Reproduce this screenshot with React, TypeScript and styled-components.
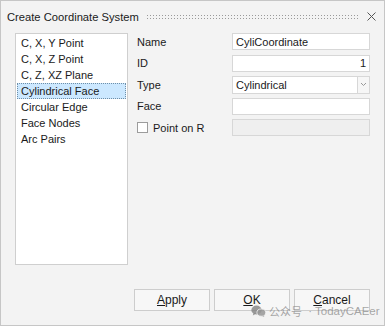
import styled, { createGlobalStyle } from 'styled-components';

const GlobalStyle = createGlobalStyle`
  html, body {
    margin: 0;
    padding: 0;
    background: #f3f3f3;
  }
  * {
    box-sizing: border-box;
  }
`;

const Dialog = styled.div`
  position: relative;
  width: 385px;
  height: 326px;
  display: flex;
  flex-direction: column;
  border: 1px solid #c6c6c6;
  background: #f3f3f3;
  font-family: 'Liberation Sans', Arial, sans-serif;
  font-size: 11px;
  color: #1a1a1a;
`;

const TitleBar = styled.div`
  height: 31px;
  display: flex;
  align-items: center;
  padding: 0 8px 0 6px;
  font-size: 11.2px;
`;

const Grip = styled.div`
  flex: 1;
  height: 6px;
  margin: 0 8px 0 7px;
  background-image: radial-gradient(circle, #9a9a9a 0.7px, transparent 1px);
  background-size: 3px 3px;
`;

const Close = styled.span`
  width: 9px;
  height: 9px;
  display: flex;
  color: #555;
`;

const Body = styled.div`
  display: flex;
  padding: 1px 14px 0 14px;
  gap: 8px;
`;

const ListBox = styled.ul`
  width: 115px;
  height: 232px;
  margin: 0;
  padding: 1px 1px;
  list-style: none;
  background: #fff;
  border: 1px solid #cfcfcf;
`;

const ListItem = styled.li<{ $selected?: boolean }>`
  height: 16px;
  line-height: 14px;
  padding: 0 3px;
  border: 1px dotted ${(p) => (p.$selected ? '#6f8fa8' : 'transparent')};
  background: ${(p) => (p.$selected ? '#cce8ff' : 'transparent')};
  white-space: nowrap;
`;

const Form = styled.div`
  display: grid;
  grid-template-columns: 96px 138px;
  grid-auto-rows: 17px;
  row-gap: 4.5px;
  align-items: center;
`;

const Label = styled.label`
  display: flex;
  align-items: center;
  gap: 5px;
  padding-left: 1px;
`;

const Field = styled.div<{ $disabled?: boolean; $align?: string }>`
  height: 17px;
  display: flex;
  align-items: center;
  justify-content: ${(p) => p.$align ?? 'flex-start'};
  padding: 0 3px;
  background: ${(p) => (p.$disabled ? '#efefef' : '#fff')};
  border: 1px solid #d7d7d7;
`;

const Combo = styled.div`
  height: 18px;
  display: flex;
  background: #fff;
  border: 1px solid #d7d7d7;
`;

const ComboText = styled.span`
  flex: 1;
  display: flex;
  align-items: center;
  padding: 0 3px;
`;

const ComboButton = styled.span`
  width: 12px;
  display: flex;
  align-items: center;
  justify-content: center;
  border-left: 1px solid #d7d7d7;
  background: #f6f6f6;
`;

const Check = styled.span`
  width: 11px;
  height: 11px;
  border: 1px solid #9c9c9c;
  background: #fff;
`;

const Footer = styled.div`
  margin-top: auto;
  display: flex;
  justify-content: flex-end;
  gap: 4px;
  padding: 0 14px 14px 0;
`;

const Button = styled.button`
  width: 76px;
  height: 22px;
  padding: 0;
  border: 1px solid #cdcdcd;
  background: #f7f7f7;
  font-family: inherit;
  font-size: 12px;
  color: #1a1a1a;

  & u {
    text-decoration-thickness: 1px;
  }
`;

const Watermark = styled.div`
  position: absolute;
  left: 250px;
  top: 302px;
  display: flex;
  align-items: center;
  gap: 3px;
  white-space: nowrap;
  font-size: 11.5px;
  line-height: 16px;
  color: rgba(130, 130, 130, 0.7);
  pointer-events: none;
`;

const WatermarkCjk = styled.span`
  font-family: 'Noto Sans CJK SC', sans-serif;
  font-size: 11px;
`;

const WatermarkLatin = styled.span`
  font-family: 'Liberation Sans', Arial, sans-serif;
  white-space: pre;
`;

const items = [
  'C, X, Y Point',
  'C, X, Z Point',
  'C, Z, XZ Plane',
  'Cylindrical Face',
  'Circular Edge',
  'Face Nodes',
  'Arc Pairs',
];

export default function App() {
  return (
    <>
      <GlobalStyle />
      <Dialog>
        <TitleBar>
          <span>Create Coordinate System</span>
          <Grip />
          <Close>
            <svg width="9" height="9" viewBox="0 0 9 9">
              <path d="M0.5 0.5 L8.5 8.5 M8.5 0.5 L0.5 8.5" stroke="#555" strokeWidth="1" />
            </svg>
          </Close>
        </TitleBar>
        <Body>
          <ListBox>
            {items.map((it) => (
              <ListItem key={it} $selected={it === 'Cylindrical Face'}>
                {it}
              </ListItem>
            ))}
          </ListBox>
          <Form>
            <Label>Name</Label>
            <Field>CyliCoordinate</Field>
            <Label>ID</Label>
            <Field $align="flex-end">1</Field>
            <Label>Type</Label>
            <Combo>
              <ComboText>Cylindrical</ComboText>
              <ComboButton>
                <svg width="7" height="5" viewBox="0 0 7 5">
                  <path d="M1 1 L3.5 3.5 L6 1" stroke="#999" strokeWidth="1" fill="none" />
                </svg>
              </ComboButton>
            </Combo>
            <Label>Face</Label>
            <Field />
            <Label>
              <Check />
              Point on R
            </Label>
            <Field $disabled />
          </Form>
        </Body>
        <Footer>
          <Button>
            <u>A</u>pply
          </Button>
          <Button>
            <u>O</u>K
          </Button>
          <Button>
            <u>C</u>ancel
          </Button>
        </Footer>
        <Watermark>
          <svg width="15" height="12" viewBox="0 0 15 12">
            <ellipse cx="5.5" cy="5" rx="5.2" ry="4.4" fill="rgba(130,130,130,0.8)" />
            <path d="M2.5 8 L1.8 10.5 L5 8.8 Z" fill="rgba(130,130,130,0.8)" />
            <ellipse cx="10.3" cy="7.6" rx="4.4" ry="3.6" fill="rgba(150,150,150,0.85)" stroke="#f3f3f3" strokeWidth="0.8" />
            <path d="M12.5 10.5 L13.4 12 L11 11 Z" fill="rgba(150,150,150,0.85)" />
          </svg>
          <WatermarkCjk>公众号</WatermarkCjk>
          <WatermarkLatin>{' · TodayCAEer'}</WatermarkLatin>
        </Watermark>
      </Dialog>
    </>
  );
}
